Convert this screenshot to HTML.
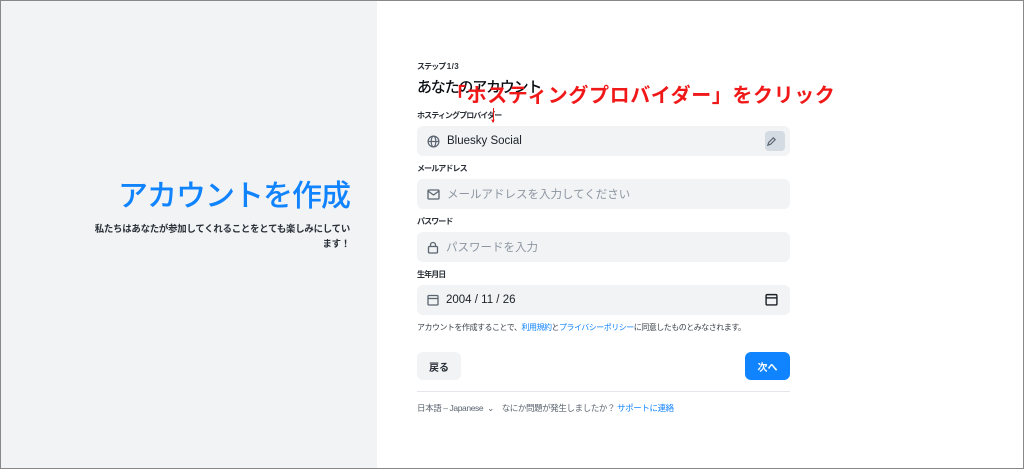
<!DOCTYPE html>
<html><head><meta charset="utf-8"><style>
*{box-sizing:border-box;margin:0;padding:0}
body{width:1024px;height:469px;overflow:hidden;font-family:"Liberation Sans","Noto Sans CJK JP",sans-serif;background:#fff;position:relative;color:#0b0f14}
.frame{position:absolute;inset:0;border:1px solid #888;pointer-events:none;z-index:9}
.left{position:absolute;left:0;top:0;width:377px;height:469px;background:#f1f3f5}
.h1{position:absolute;left:0;width:350px;text-align:right;top:171px;font-size:30px;color:#1083fe;font-weight:500;white-space:nowrap;letter-spacing:-1px}
.sub{position:absolute;left:86px;width:264px;top:221px;font-size:9.4px;text-align:right;line-height:15px;color:#2a3038;font-weight:700;letter-spacing:-0.2px}
.a{position:absolute}
.lab{font-size:8px;font-weight:700;color:#2a3038;letter-spacing:-0.9px;white-space:nowrap}
.field{position:absolute;left:417px;width:373px;height:30px;background:#f1f3f5;border-radius:6px;font-size:11.5px;display:flex;align-items:center;padding-left:10px}
.field svg{margin-right:7px}
.ph{color:#8d96a1}
a{color:#1083fe;text-decoration:none}
</style></head><body>
<div class="left"></div>
<div class="h1">アカウントを作成</div>
<div class="sub">私たちはあなたが参加してくれることをとても楽しみにしています！</div>

<div class="a lab" style="left:417px;top:61px">ステップ 1 / 3</div>
<div class="a" style="left:417px;top:76px;font-size:15px;font-weight:500;letter-spacing:-1.2px">あなたのアカウント</div>
<div class="a" style="left:446px;top:79px;font-size:20px;font-weight:700;color:#f01818;letter-spacing:0.6px;white-space:nowrap">「ホスティングプロバイダー」をクリック</div>
<div class="a lab" style="left:417px;top:110px">ホスティングプロバイダー</div>
<div class="a" style="left:493px;top:108px;width:1px;height:14px;background:#f01818"></div>
<div class="a" style="left:490px;top:119px;font-size:6px;color:#f01818">▼</div>
<div class="field" style="top:126px"><svg width="13" height="13" viewBox="0 0 14 14" fill="none" stroke="#5b6570" stroke-width="1.3"><circle cx="7" cy="7" r="5.8"/><ellipse cx="7" cy="7" rx="2.5" ry="5.8"/><path d="M1.2 7h11.6"/></svg><span style="color:#1c2128">Bluesky Social</span>
<div style="position:absolute;right:5px;top:5px;width:20px;height:20px;background:#d4dbe2;border-radius:4px;display:flex;align-items:center;justify-content:center"><svg width="11" height="11" viewBox="0 0 12 12" fill="none" stroke="#5b6570" stroke-width="1.3"><path d="M2 10l1-3 5-5 2 2-5 5z"/></svg></div></div>
<div class="a lab" style="left:417px;top:163px">メールアドレス</div>
<div class="field" style="top:179px"><svg width="13" height="11" viewBox="0 0 13 11" fill="none" stroke="#5b6570" stroke-width="1.3"><rect x="1" y="1" width="11" height="9" rx="1"/><path d="M1 2l5.5 4L12 2"/></svg><span class="ph">メールアドレスを入力してください</span></div>
<div class="a lab" style="left:417px;top:216px">パスワード</div>
<div class="field" style="top:232px"><svg width="12" height="13" viewBox="0 0 12 13" fill="none" stroke="#5b6570" stroke-width="1.3"><rect x="1.5" y="5.5" width="9" height="6.5" rx="1"/><path d="M3.5 5.5V4a2.5 2.5 0 0 1 5 0v1.5"/></svg><span class="ph">パスワードを入力</span></div>
<div class="a lab" style="left:417px;top:269px">生年月日</div>
<div class="field" style="top:285px"><svg width="12" height="12" viewBox="0 0 12 12" fill="none" stroke="#5b6570" stroke-width="1.3"><rect x="1" y="1.5" width="10" height="9.5" rx="1"/><path d="M1 4.5h10"/></svg><span style="color:#1c2128">2004 / 11 / 26</span>
<svg style="position:absolute;right:12px;top:8px;margin:0" width="13" height="13" viewBox="0 0 12 12" fill="none" stroke="#1c2128" stroke-width="1.3"><rect x="1" y="1.5" width="10" height="9.5" rx="1"/><path d="M1 4.5h10"/></svg></div>
<div class="a" style="left:417px;top:322px;font-size:8px;color:#3a424b;white-space:nowrap;letter-spacing:-0.5px">アカウントを作成することで、<a>利用規約</a>と<a>プライバシーポリシー</a>に同意したものとみなされます。</div>
<div class="a" style="left:417px;top:352px;width:44px;height:28px;background:#f1f3f5;border-radius:6px;font-size:10px;font-weight:700;display:flex;align-items:center;justify-content:center;color:#2a3038">戻る</div>
<div class="a" style="left:745px;top:352px;width:45px;height:28px;background:#1083fe;border-radius:6px;font-size:10px;font-weight:700;display:flex;align-items:center;justify-content:center;color:#fff">次へ</div>
<div class="a" style="left:417px;top:391px;width:373px;height:1px;background:#e3e7eb"></div>
<div class="a" style="left:417px;top:402px;font-size:8.5px;color:#5b6570;white-space:nowrap;letter-spacing:-0.4px">日本語 – Japanese &nbsp;⌄ &nbsp;&nbsp; なにか問題が発生しましたか？ <a>サポートに連絡</a></div>
<div class="frame"></div>
</body></html>
